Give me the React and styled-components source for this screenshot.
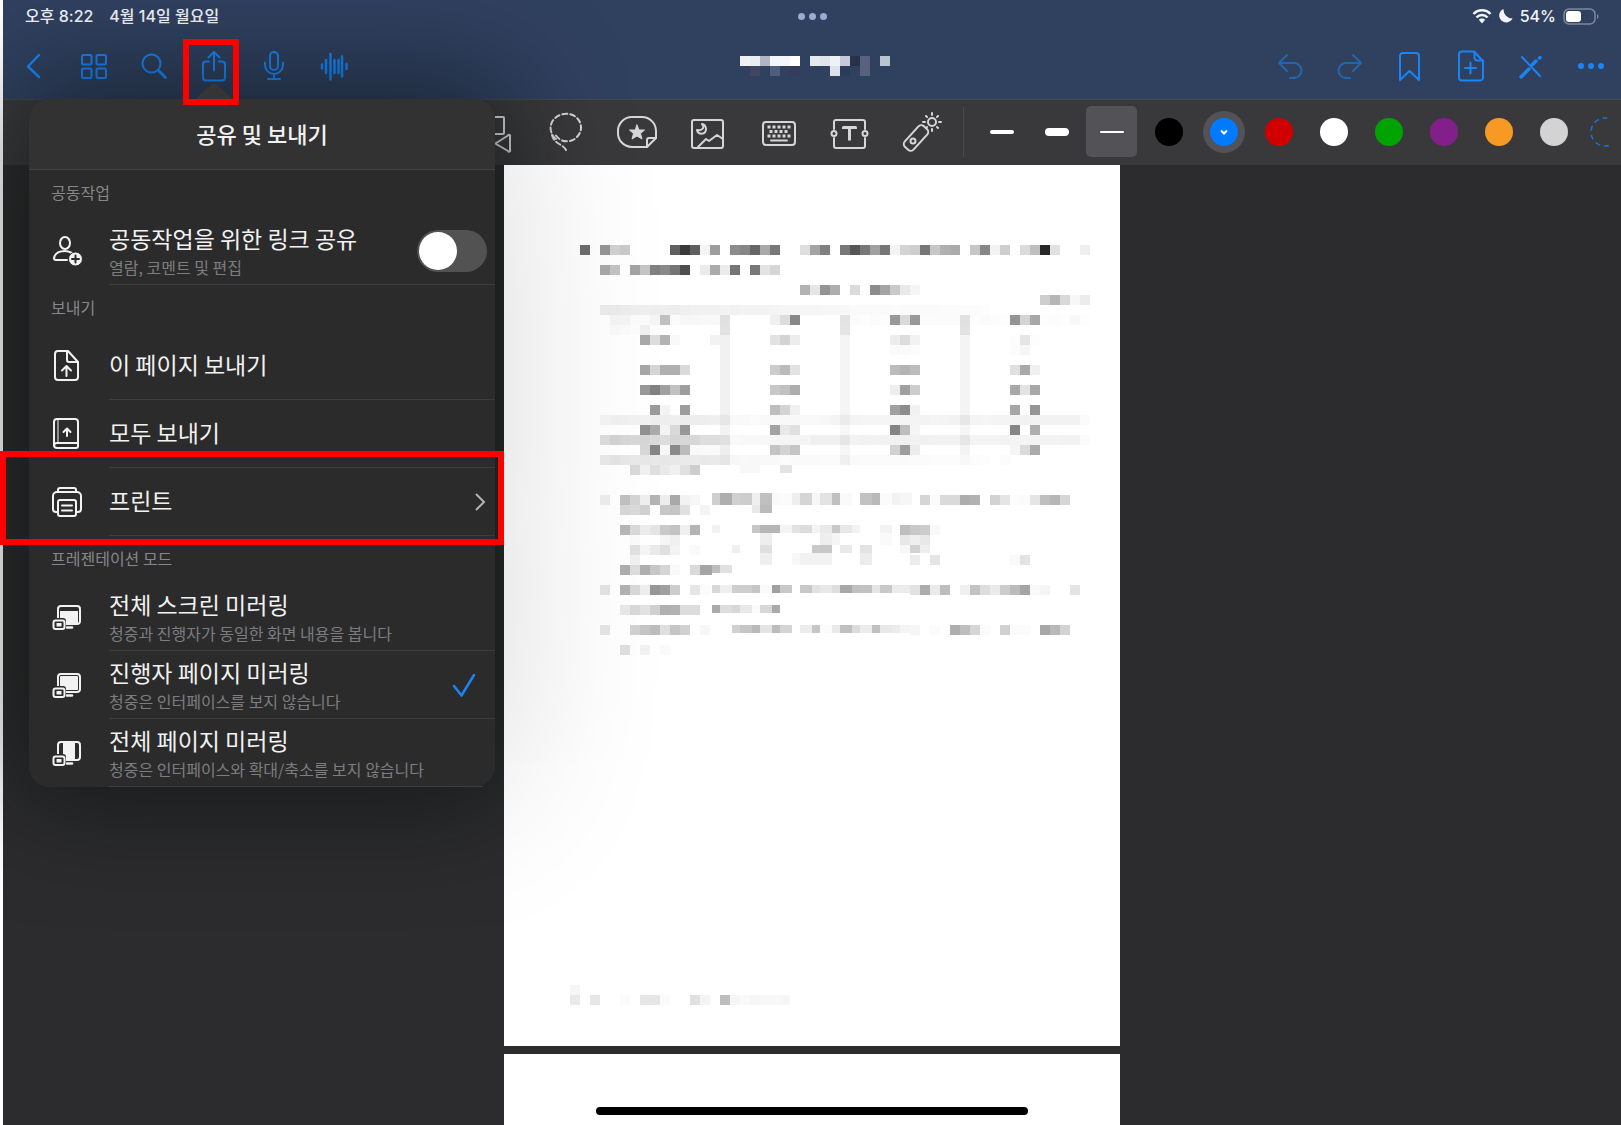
import { useState } from "react";
import styled, { createGlobalStyle } from "styled-components";

// cells that alternate between 8 and 12 wide
const MIXED = 0;

// [x, y, cell width, cell height, shades], ".." leaves a cell empty
const NOTE = [
    [76, 80, 10, 10, "6b"],
    [96, 80, 10, 10, "93cfc9........603a60f49d..8c8666a978....dfa480..785678a077f3d4ce76c7b0ab..c686f3ce..dbbf28e1....ee"],
    [96, 100, 10, 10, "a6c1..a2c48089754e..ebabeb75..78e2d6"],
    [296, 120, 10, 10, "b2e694ae..db..8ca4c9e9f5"],
    [536, 130, 10, 10, "ceb6d9f7ec"],
    [96, 140, 10, 10, "e8e9ebedeeedeeedeff1f1f1f3f1f3f3f3f4f5f5f6f6f7f7f8fafafafafbfafafafafbfbfcfcfd"],
    [106, 150, 10, 10, "f2f3fafaf5c0fbf7f7f8f9e1........f0dd88........e3fbfdfbfd99da99fbfbfbfbe1fdfbfcfd94d4a7fdfcfdf8fd"],
    [106, 160, 10, 10, "f7f9fbeffcfd"],
    [136, 170, 10, 10, "a8ddb3f9......f2f1........e2d3ed..................eddcf2..................fde5fd"],
    [386, 180, 10, 10, "fafafc..................fcf6"],
    [136, 200, 10, 10, "a6d5b0b0da................ccbbe3..................bcb4bd..................e0a9f0"],
    [136, 220, 10, 10, "9880a0c29e................c8c1ad..................eea0cd..................a8e3a8"],
    [146, 240, 10, 10, "9af3ff9d................bed4f0..................a08cf2..................a6fc95"],
    [96, 250, 10, 10, "f1eeeff0f1eeeeefededeeefe7f9f9fbf9f9f8f8f9f9f7f4ebf4f5f5f5f5f4f4f3f5f4f2e7f4f5f4f4f3f2f3f2f2f2f2fb"],
    [136, 260, 10, 10, "90abf3d998................a2e8e0..................84bdf5..................86ffae"],
    [96, 270, 10, 10, "dad1d5d7d5dadcd5d7d7dddde1f9f8f8f7f5f5f5f4f0f0f0e6f2f1f2f1f1f0f2f0f1f1f1e6f4f4f4f3f4f4f4f3f3f2f2fb"],
    [136, 280, 10, 10, "d685f78abbf9fafaee........c4d3c5..................d29dec..................f5dbab"],
    [96, 290, 10, 10, "e6e2e6e8e7e8e7e8eaeae9eae6f7f9f8f9f9fbfafafafbfbf0fafbfbfbfbfafbfbfcfcfcf8fcfd..fc"],
    [126, 300, 10, 10, "d8f0dfe9f0e0cd"],
    [236, 300, 20, 8, "f8"],
    [276, 300, 12, 8, "e3"],
    [96, 330, 10, 10, "ea..bfd3eeb3eda9f2f6"],
    [208, 328, MIXED, 12, "cfaed0cdefc0f9fbeed5f7e3c0fa..c2b9fbf2f6"],
    [416, 330, 10, 10, "d5fbdadaadb2..d2e5fdfbe5bfb6d6"],
    [116, 340, 10, 10, "d5d9d0..c7c5e1..f4"],
    [248, 340, MIXED, 8, "e9bb"],
    [116, 360, 10, 10, "b5d8ece4c9c3f0b4"],
    [208, 360, MIXED, 8, "f2......c6b6b6f4e3dcf4e9c8e8f2....f3"],
    [396, 360, 10, 10, "bec8ccf9"],
    [126, 370, 10, 10, "f9....f5f0"],
    [208, 368, MIXED, 12, "..........ee..........eef5........fa"],
    [396, 370, 10, 10, "e8efe8"],
    [126, 380, 10, 10, "e0f4eae0f3..fa"],
    [208, 380, MIXED, 8, "....f0....e0........c9c7..e9..e2"],
    [396, 380, 10, 8, "f7d2ee"],
    [126, 390, 10, 10, "ef"],
    [208, 388, MIXED, 12, "..........ef....f8f2f2f2......ec"],
    [406, 390, 10, 10, "ec..e4"],
    [506, 390, 10, 10, "f9e3"],
    [116, 400, 10, 10, "acdcaec6d5f9..da"],
    [196, 400, 12, 10, "a5"],
    [208, 400, MIXED, 8, "bde0"],
    [96, 420, 10, 10, "e0..b0d6ed97a0cd..e6fb"],
    [208, 420, MIXED, 8, "d8eececec4faa0c9..c8e2e8dea8c0c2e5c8ebec"],
    [406, 420, 10, 10, "e3aceabd..f0c2ddeaccbba4f9f5....e4"],
    [116, 440, 10, 10, "e7d7e2d0b0b2dcdc"],
    [208, 440, MIXED, 8, "aaddd7e9fad7aa"],
    [96, 460, 10, 10, "e2....d0c4bcdfc5d1..f7"],
    [208, 460, MIXED, 8, "....d0c6bae4bcd4..ecc6fbeac0dcecc0e8ecf4"],
    [406, 460, 10, 10, "f6..fb..aebed6fb..d0fbfb..a7b8d3"],
    [116, 480, 10, 10, "dd..f1..fa"],
    [66, 820, 10, 10, "f6"],
    [66, 830, 10, 10, "e9..e6....fb..e7e6fb....e0f4..bef6faf6f7f8f6"],
];

const NOTE_BARS = [
    [216, 150, 20, "#e2e2e2"],
    [216, 170, 80, "#f1f1f1"],
    [336, 150, 20, "#e4e4e6"],
    [336, 170, 80, "#f5f5f5"],
    [456, 150, 20, "#e2e2e2"],
    [456, 170, 80, "#f4f4f4"],
    [216, 260, 10, "#f3f3f5"],
    [336, 260, 10, "#f7f7f7"],
    [456, 260, 10, "#f6f6f6"],
    [336, 280, 10, "#f6f6f6"],
    [456, 280, 10, "#f4f4f4"],
];

const TITLE_CELLS = [
    [0, 0, "#f0f1f4"], [10, 0, "#eaedf1"], [20, 0, "#b2b5c4"], [30, 0, "#f3f6fa"], [40, 0, "#f3f6fa"],
    [50, 0, "#ffffff"], [70, 0, "#e6ebf0"], [80, 0, "#dfe5ea"], [90, 0, "#edf2f7"], [100, 0, "#c7c8dc"],
    [110, 0, "#28324a"], [120, 0, "#58627c"], [140, 0, "#bac5d2"],
    [10, 10, "#404560"], [30, 10, "#505d7b"], [50, 10, "#343b5c"], [90, 10, "#dbe2ea"], [100, 10, "#2c3b57"],
    [120, 10, "#58627c"],
];

const PEN_COLORS = [
    { name: "검정", value: "#000000" },
    { name: "파랑", value: "#007aff", active: true },
    { name: "빨강", value: "#d00000" },
    { name: "하양", value: "#ffffff" },
    { name: "초록", value: "#00a300" },
    { name: "보라", value: "#821f8b" },
    { name: "주황", value: "#f79a23" },
    { name: "회색", value: "#d3d3d3" },
];

const Icon = ({ w = 32, h = 32, children }) => (
    <svg width={w} height={h} viewBox={`0 0 ${w} ${h}`} fill="none" stroke="currentColor"
        strokeWidth="2" strokeLinecap="round" strokeLinejoin="round" aria-hidden="true">
        {children}
    </svg>
);

const NoteMosaic = () => (
    <MosaicArt viewBox="0 0 616 881" shapeRendering="crispEdges" aria-hidden="true">
        {NOTE_BARS.map(([x, y, h, fill], i) => (
            <rect key={i} x={x} y={y} width="10" height={h} fill={fill} />
        ))}
        {NOTE.map(([x, y, w, h, shades], row) =>
            shades.match(/../g).map((s, i) => {
                if (s === "..") return null;
                const odd = i % 2;
                const left = w === MIXED ? x + (i - odd) * 10 + odd * 8 : x + i * w;
                const width = w === MIXED ? 8 + odd * 4 : w;
                return <rect key={`${row}-${i}`} x={left} y={y} width={width} height={h} fill={`#${s}${s}${s}`} />;
            })
        )}
    </MosaicArt>
);

const ScreenIcon = ({ children }) => (
    <Icon>
        <rect x="7" y="5" width="22" height="18" rx="3" />
        {children}
        <path d="M16 26.500H21" strokeWidth="2.500" />
        <rect x="1" y="17" width="14" height="12" rx="3" fill="#2b2b2b" stroke="none" />
        <rect x="2.500" y="19.500" width="11" height="8.500" rx="2" />
        <rect x="5.500" y="22" width="5" height="3.500" fill="currentColor" stroke="none" />
    </Icon>
);

const NavIcons = {
    back: <Icon><path d="M21 5L10 16.500L21 27" strokeWidth="2.500" /></Icon>,
    grid: (
        <Icon>
            <rect x="4" y="5" width="9.500" height="9.500" rx="1.500" />
            <rect x="18.500" y="5" width="9.500" height="9.500" rx="1.500" />
            <rect x="4" y="18.500" width="9.500" height="9.500" rx="1.500" />
            <rect x="18.500" y="18.500" width="9.500" height="9.500" rx="1.500" />
        </Icon>
    ),
    search: <Icon><circle cx="13.500" cy="13.500" r="9" /><path d="M20.500 20.500L27.500 27.500" strokeWidth="3" /></Icon>,
    share: (
        <Icon>
            <path d="M11 11.500H8a3 3 0 0 0-3 3V27.500a3 3 0 0 0 3 3H24a3 3 0 0 0 3-3V14.500a3 3 0 0 0-3-3H21" />
            <path d="M16 20.500V2.500M10.500 7.500L16 2L21.500 7.500" />
        </Icon>
    ),
    mic: (
        <Icon>
            <rect x="12" y="2" width="8" height="18" rx="4" />
            <path d="M7 12.500V15a9 9 0 0 0 18 0V12.500M16 24V29M10 29H22" />
        </Icon>
    ),
    wave: <Icon><path d="M4 14.500V18.500M8 10V23M12.500 4V29.500M16.500 10V23M20.500 10V23M24 6.500V26.500M28.500 14V19" strokeWidth="2.500" /></Icon>,
    undo: <Icon><path d="M12 5L4 13L12 21M4 13H19a7.500 7.500 0 0 1 0 15H15" /></Icon>,
    redo: <Icon><path d="M18 5L26 13L18 21M26 13H11a7.500 7.500 0 0 0 0 15H15" /></Icon>,
    bookmark: <Icon><path d="M5 30V6a3 3 0 0 1 3-3H21a3 3 0 0 1 3 3V30L14.500 21Z" /></Icon>,
    addPage: (
        <Icon>
            <path d="M19 1.500H7a3 3 0 0 0-3 3V27.500a3 3 0 0 0 3 3H25a3 3 0 0 0 3-3V11Z" />
            <path d="M19.500 2V7.500a3 3 0 0 0 3 3H28M15.500 12.500V23.500M10 18H21" />
        </Icon>
    ),
    penOff: (
        <Icon>
            <path d="M7 7L25 26" />
            <path d="M6 27L7.500 25.500L14 19M17.500 14.500L21 11" strokeWidth="3.500" />
            <path d="M24.500 8L25 7.500" strokeWidth="3.500" />
        </Icon>
    ),
    more: (
        <Icon>
            <g fill="currentColor" stroke="none">
                <circle cx="6" cy="16" r="3" /><circle cx="16" cy="16" r="3" /><circle cx="26" cy="16" r="3" />
            </g>
        </Icon>
    ),
};

const NAV_LEFT = [
    ["back", "뒤로"], ["grid", "페이지 목록"], ["search", "검색"], ["share", "공유"], ["mic", "녹음"], ["wave", "오디오"],
];
const NAV_RIGHT = [
    ["undo", "실행 취소"], ["redo", "다시 실행"], ["bookmark", "책갈피"], ["addPage", "페이지 추가"],
    ["penOff", "읽기 전용"], ["more", "더 보기"],
];

const TOOLS = [
    ["도형", (
        <Icon w={40} h={44}>
            <rect x="12" y="7" width="17" height="17" rx="1" />
            <path d="M35 26.500V40a1 1 0 0 1-2 1L22 34.500a1 1 0 0 1 0-2L33 25.500a1 1 0 0 1 2 1Z" />
        </Icon>
    )],
    ["올가미", (
        <Icon w={40} h={44}>
            <path d="M10 29C5 25 3 18 6 12C10 4 22 1 30 7C38 14 36 25 27 30C20 33 13 31 9 24" strokeDasharray="5 3" />
            <path d="M6 25C8 34 17 34 20 40" strokeDasharray="5 3" />
        </Icon>
    )],
    ["스티커", (
        <Icon w={44} h={44}>
            <path d="M32 37H17a14 14 0 0 1-14-15a14 14 0 0 1 14-15H27a14 14 0 0 1 14 14V28Z" />
            <path d="M32 37V30a2 2 0 0 1 2-2H41" />
            <path d="M22 15L24 20H29.500L25.500 23.500L27 29L22 26L17 29L18.500 23.500L14.500 20H20Z" fill="currentColor" strokeWidth="1" />
        </Icon>
    )],
    ["이미지", (
        <Icon w={40} h={44}>
            <rect x="4" y="10" width="31" height="28" rx="2" />
            <path d="M10 37L18 29L21 31L29 25L35 29M14 14C17 17 15 21 9 20C10 25 18 25 18 19C18 16 16 14 14 14Z" />
        </Icon>
    )],
    ["키보드", (
        <Icon w={40} h={44}>
            <rect x="4" y="12" width="32" height="23" rx="3" />
            <path d="M8.500 17H32M10.500 21.500H30M8.500 26H32" strokeLinecap="butt" strokeWidth="3" strokeDasharray="3 2" />
            <path d="M12 30.500H28" />
        </Icon>
    )],
    ["텍스트", (
        <Icon w={40} h={44}>
            <path d="M4 19V12a2 2 0 0 1 2-2H33a2 2 0 0 1 2 2V19M4 28V36a2 2 0 0 0 2 2H33a2 2 0 0 0 2-2V28" />
            <circle cx="4" cy="23.500" r="2.500" /><circle cx="35" cy="23.500" r="2.500" />
            <path d="M13.500 19V17.500H25.500V19M19.500 17.500V30.500" strokeWidth="3" strokeLinecap="butt" />
        </Icon>
    )],
    ["레이저 포인터", (
        <Icon w={44} h={44}>
            <rect x="-6" y="-14" width="12" height="28" rx="4" transform="translate(17 28) rotate(42)" />
            <circle cx="14" cy="31" r="2.500" />
            <circle cx="33" cy="12" r="4" />
            <path d="M33 3V5M33 19V21M24 12H26M40 12H42M27 6L28 7M38 17L39 18M39 6L38 7M27 18L28 17" />
        </Icon>
    )],
];

const App = () => {
    const [shared, setShared] = useState(false);

    return (
        <Screen>
            <GlobalStyle />
            <Header>
                <StatusBar>
                    <StatusSide>
                        <span>오후 8:22</span>
                        <span>4월 14일 월요일</span>
                    </StatusSide>
                    <Dots><i /><i /><i /></Dots>
                    <StatusInfo>
                        <svg width="20" height="16" viewBox="0 0 20 16" fill="none" stroke="currentColor" strokeWidth="2.500" aria-hidden="true">
                            <path d="M1.500 6C6 1 14 1 18.500 6M4.500 9.500C7.500 6 12.500 6 15.500 9.500" />
                            <path d="M10 15.500L6.800 11.800C8.500 10 11.500 10 13.200 11.800Z" fill="currentColor" stroke="none" />
                        </svg>
                        <svg width="14" height="14" viewBox="0 0 14 14" fill="currentColor" aria-hidden="true">
                            <path d="M4.500 0A7 7 0 1 0 13.500 9.500A9 9 0 0 1 4.500 0Z" />
                        </svg>
                        <span>54%</span>
                        <svg width="36" height="17" viewBox="0 0 36 17" aria-hidden="true">
                            <rect x="1" y="1" width="31" height="15" rx="5" fill="none" stroke="#7d889f" strokeWidth="1.500" />
                            <rect x="3" y="3" width="15" height="11" rx="3" fill="#fff" />
                            <path d="M34 6C36 7 36 10 34 11Z" fill="#7d889f" />
                        </svg>
                    </StatusInfo>
                </StatusBar>
                <NavBar>
                    <NavGroup>
                        {NAV_LEFT.map(([id, label]) => (
                            <NavButton key={id} aria-label={label} $marked={id === "share"}>{NavIcons[id]}</NavButton>
                        ))}
                    </NavGroup>
                    <TitleArt width="150" height="20" viewBox="0 0 150 20" shapeRendering="crispEdges" aria-hidden="true">
                        {TITLE_CELLS.map(([x, y, fill]) => (
                            <rect key={`${x}-${y}`} x={x} y={y} width="10" height="10" fill={fill} />
                        ))}
                    </TitleArt>
                    <NavGroup>
                        {NAV_RIGHT.map(([id, label]) => (
                            <NavButton key={id} aria-label={label} disabled={id === "undo" || id === "redo"}>{NavIcons[id]}</NavButton>
                        ))}
                    </NavGroup>
                </NavBar>
            </Header>

            <ToolBar>
                {TOOLS.map(([label, icon]) => (
                    <ToolButton key={label} aria-label={label}>{icon}</ToolButton>
                ))}
                <Divider />
                <PenButton aria-label="중간 선"><Stroke $size={4} /></PenButton>
                <PenButton aria-label="굵은 선"><Stroke $size={8} /></PenButton>
                <PenButton aria-label="가는 선" $active><Stroke $size={2} /></PenButton>
                <Swatches>
                    {PEN_COLORS.map(({ name, value, active }) => (
                        <SwatchButton key={name} aria-label={name}>
                            <Swatch $color={value} $active={active}>
                                {active && (
                                    <svg width="8" height="6" viewBox="0 0 8 6" fill="none" stroke="#fff" strokeWidth="2" aria-hidden="true">
                                        <path d="M1 1.500L4 4.500L7 1.500" />
                                    </svg>
                                )}
                            </Swatch>
                        </SwatchButton>
                    ))}
                    <MoreColors aria-label="색상 추가">
                        <svg width="30" height="32" viewBox="0 0 30 32" fill="none" stroke="#1a72d0" strokeWidth="1.500" aria-hidden="true">
                            <circle cx="24" cy="16" r="14" strokeDasharray="5 4" />
                        </svg>
                    </MoreColors>
                </Swatches>
            </ToolBar>

            <Canvas>
                <Page><NoteMosaic /></Page>
                <Page $next />
            </Canvas>

            <Popover>
                <PopoverTitle>공유 및 보내기</PopoverTitle>

                <SectionLabel>공동작업</SectionLabel>
                <Row as="label">
                    <Icon>
                        <ellipse cx="14" cy="8" rx="5" ry="6" />
                        <path d="M16 25H5a2 2 0 0 1-2-2C4 18 9 16 14 16C17 16 19 17 21 18" />
                        <circle cx="24.500" cy="24" r="7" fill="currentColor" stroke="#2b2b2b" strokeWidth="1" />
                        <path d="M24.500 20.500V27.500M21 24H28" stroke="#2b2b2b" />
                    </Icon>
                    <RowBody>
                        <RowText>
                            <RowTitle>공동작업을 위한 링크 공유</RowTitle>
                            <RowNote>열람, 코멘트 및 편집</RowNote>
                        </RowText>
                        <Toggle checked={shared} onChange={(e) => setShared(e.target.checked)} />
                    </RowBody>
                </Row>

                <SectionLabel>보내기</SectionLabel>
                <Row>
                    <Icon>
                        <path d="M17 1H7a3 3 0 0 0-3 3V27a3 3 0 0 0 3 3H24a3 3 0 0 0 3-3V12Z" />
                        <path d="M16 1V10a2 2 0 0 0 2 2H27M15.500 26V17M11 20.500L15.500 16L20 20.500" />
                    </Icon>
                    <RowBody><RowTitle $single>이 페이지 보내기</RowTitle></RowBody>
                </Row>
                <Row>
                    <Icon>
                        <path d="M27 25V4a3 3 0 0 0-3-3H6a3 3 0 0 0-3 3V27a3 3 0 0 0 3 3H25a2 2 0 0 0 2-2M27 25H6a3 3 0 0 0-3 3M27 25V28" />
                        <path d="M7 2V25" strokeWidth="1" />
                        <path d="M16 18V11M12.500 14L16 10.500L19.500 14" />
                    </Icon>
                    <RowBody><RowTitle $single>모두 보내기</RowTitle></RowBody>
                </Row>
                <Row $marked>
                    <Icon>
                        <path d="M7 26H5a3 3 0 0 1-3-3V10a4 4 0 0 1 4-4H26a4 4 0 0 1 4 4V23a3 3 0 0 1-3 3H25" />
                        <path d="M7 6V4a2 2 0 0 1 2-2H23a2 2 0 0 1 2 2V6" />
                        <rect x="7" y="14" width="18" height="16" rx="2" />
                        <path d="M11 19.500H21M11 24.500H21" />
                    </Icon>
                    <RowBody>
                        <RowTitle $single>프린트</RowTitle>
                        <Chevron width="12" height="20" viewBox="0 0 12 20" fill="none" stroke="currentColor" strokeWidth="2" aria-hidden="true">
                            <path d="M2 2L10 10L2 18" />
                        </Chevron>
                    </RowBody>
                </Row>

                <SectionLabel>프레젠테이션 모드</SectionLabel>
                <Row>
                    <ScreenIcon><rect x="9" y="10" width="18" height="12" fill="currentColor" stroke="none" /></ScreenIcon>
                    <RowBody>
                        <RowText>
                            <RowTitle>전체 스크린 미러링</RowTitle>
                            <RowNote>청중과 진행자가 동일한 화면 내용을 봅니다</RowNote>
                        </RowText>
                    </RowBody>
                </Row>
                <Row>
                    <ScreenIcon><rect x="9" y="7" width="18" height="14" rx="1" fill="currentColor" stroke="none" /></ScreenIcon>
                    <RowBody>
                        <RowText>
                            <RowTitle>진행자 페이지 미러링</RowTitle>
                            <RowNote>청중은 인터페이스를 보지 않습니다</RowNote>
                        </RowText>
                        <Check width="24" height="26" viewBox="0 0 24 26" fill="none" stroke="currentColor" strokeWidth="2.500" strokeLinecap="round" strokeLinejoin="round" aria-hidden="true">
                            <path d="M2 14L9.500 23.500L22 3" />
                        </Check>
                    </RowBody>
                </Row>
                <Row $last>
                    <ScreenIcon><rect x="12" y="6" width="12" height="16" fill="currentColor" stroke="none" /></ScreenIcon>
                    <RowBody>
                        <RowText>
                            <RowTitle>전체 페이지 미러링</RowTitle>
                            <RowNote>청중은 인터페이스와 확대/축소를 보지 않습니다</RowNote>
                        </RowText>
                    </RowBody>
                </Row>
            </Popover>

            <HomeIndicator />
        </Screen>
    );
};

const GlobalStyle = createGlobalStyle`
    * {
        box-sizing: border-box;
    }
    body {
        margin: 0;
        background: #fff;
        font-family: "Noto Sans CJK KR", sans-serif;
    }
    button, input {
        margin: 0;
        padding: 0;
        border: 0;
        background: none;
        font: inherit;
        color: inherit;
        text-align: left;
    }
    svg {
        flex: none;
        display: block;
    }
`;

const Screen = styled.div`
    position: relative;
    display: flex;
    flex-direction: column;
    height: 100vh;
    margin-left: 3px;
    overflow: clip;
    overflow-clip-margin: 3px;
    background: #2c2c2e;
`;

const Header = styled.header`
    flex: none;
    background: #30405f;
    border-bottom: 1px solid #46464d;
`;

const StatusBar = styled.div`
    display: grid;
    grid-template-columns: 1fr auto 1fr;
    align-items: center;
    height: 32px;
    padding: 0 22px;
    color: #f2f4f8;
    font-family: Inter, "Noto Sans CJK KR", sans-serif;
    font-size: 16px;
    font-weight: 500;
    line-height: 20px;
`;

const StatusSide = styled.div`
    display: flex;
    gap: 16px;
`;

const StatusInfo = styled.div`
    display: flex;
    align-items: center;
    justify-content: flex-end;
    gap: 7px;
`;

const Dots = styled.div`
    display: flex;
    gap: 4px;
    i {
        width: 7px;
        height: 7px;
        border-radius: 50%;
        background: #9aaad0;
    }
`;

const NavBar = styled.nav`
    display: grid;
    grid-template-columns: 1fr auto 1fr;
    align-items: center;
    height: 67px;
`;

const NavGroup = styled.div`
    display: flex;
    &:first-child {
        padding-left: 1px;
    }
    &:last-child {
        justify-content: flex-end;
    }
`;

const NavButton = styled.button`
    position: relative;
    display: flex;
    align-items: center;
    justify-content: center;
    width: 60px;
    height: 66px;
    color: #1a84f5;
    &:disabled {
        color: #2466ac;
    }
    ${({ $marked }) => $marked && `
        &::after {
            content: "";
            position: absolute;
            z-index: 5;
            inset: 6px 5px -6px -1px;
            border: 6px solid #ff0000;
        }
    `}
`;

const TitleArt = styled.svg`
    margin-left: 6px;
`;

const ToolBar = styled.div`
    flex: none;
    display: flex;
    align-items: center;
    justify-content: flex-end;
    height: 65px;
    padding: 0 10px 2px 0;
    background: #39393b;
    color: #d6d6d6;
`;

const ToolButton = styled.button`
    flex: none;
    display: flex;
    align-items: center;
    justify-content: center;
    width: 71px;
    height: 50px;
`;

const Divider = styled.div`
    width: 1px;
    height: 50px;
    margin: 0 10px 0 7px;
    background: #4b4b4d;
`;

const PenButton = styled.button`
    display: flex;
    align-items: center;
    justify-content: center;
    width: 51px;
    height: 51px;
    margin: 0 2px;
    border-radius: 5px;
    background: ${({ $active }) => ($active ? "#525257" : "transparent")};
`;

const Stroke = styled.span`
    width: 24px;
    height: ${({ $size }) => $size}px;
    border-radius: 4px;
    background: #fff;
`;

const Swatches = styled.div`
    display: flex;
    align-items: center;
    margin-left: 2px;
`;

const SwatchButton = styled.button`
    display: flex;
    align-items: center;
    justify-content: center;
    width: 55px;
    height: 50px;
`;

const Swatch = styled.span`
    display: flex;
    align-items: center;
    justify-content: center;
    width: 28px;
    height: 28px;
    border-radius: 50%;
    background: ${({ $color }) => $color};
    box-shadow: ${({ $active }) => ($active ? "0 0 0 7px #525257" : "none")};
`;

const MoreColors = styled.button`
    width: 30px;
    overflow: hidden;
`;

const Canvas = styled.main`
    flex: 1;
    display: flex;
    flex-direction: column;
    align-items: center;
    gap: 8px;
    min-height: 0;
`;

const Page = styled.section`
    position: relative;
    z-index: 3;
    flex: ${({ $next }) => ($next ? "1" : "none")};
    width: 100%;
    max-width: 616px;
    overflow: hidden;
    background: #fff;
    ${({ $next }) => !$next && `
        &::before {
            content: "";
            position: absolute;
            top: -66px;
            left: -475px;
            width: 466px;
            height: 689px;
            box-shadow: 0 0 170px rgba(0, 0, 0, 0.19);
        }
    `}
`;

const MosaicArt = styled.svg`
    position: relative;
    width: 100%;
`;

const Popover = styled.aside`
    position: absolute;
    z-index: 2;
    top: 99px;
    left: 26px;
    width: 466px;
    border-radius: 20px;
    background: #2b2b2b;
    color: #f2f2f2;
    box-shadow: 0 0 110px 12px rgba(4, 10, 6, 0.55);
    &::before {
        content: "";
        position: absolute;
        top: -16px;
        left: 166px;
        width: 38px;
        height: 16px;
        background: #353535;
        clip-path: polygon(0 100%, 42% 10%, 50% 0, 58% 10%, 100% 100%);
    }
`;

const PopoverTitle = styled.h1`
    margin: 0;
    height: 71px;
    border-bottom: 1px solid #434345;
    border-radius: 20px 20px 0 0;
    background: #323233;
    font-size: 22px;
    font-weight: 500;
    line-height: 68px;
    text-align: center;
`;

const SectionLabel = styled.h2`
    margin: 0;
    padding: 11px 22px 0;
    height: 47px;
    color: #87878b;
    font-size: 16px;
    font-weight: 400;
    line-height: 22px;
`;

const Row = styled.button`
    position: relative;
    display: flex;
    align-items: center;
    gap: 26px;
    width: 100%;
    height: 68px;
    padding-left: 22px;
    ${({ $last }) => $last && "padding-right: 12px;"}
    ${({ $marked }) => $marked && `
        &::after {
            content: "";
            position: absolute;
            inset: -17px -9px -9px -29px;
            border: 6px solid #ff0000;
        }
    `}
`;

const RowBody = styled.span`
    flex: 1;
    display: flex;
    align-items: center;
    justify-content: space-between;
    height: 100%;
    border-bottom: 1px solid #3d3d3f;
`;

const RowText = styled.span`
    display: flex;
    flex-direction: column;
    gap: 2px;
`;

const RowTitle = styled.span`
    padding-bottom: ${({ $single }) => ($single ? 4 : 0)}px;
    font-size: 23px;
    line-height: 30px;
    white-space: nowrap;
`;

const RowNote = styled.span`
    color: #7d7d81;
    font-size: 16px;
    line-height: 24px;
    white-space: nowrap;
`;

const Toggle = styled.input.attrs({ type: "checkbox" })`
    appearance: none;
    flex: none;
    width: 70px;
    height: 42px;
    margin-right: 8px;
    padding: 2px;
    border-radius: 21px;
    background: #525252;
    &::before {
        content: "";
        display: block;
        width: 38px;
        height: 38px;
        border-radius: 50%;
        background: #fff;
    }
    &:checked {
        background: #007aff;
    }
    &:checked::before {
        margin-left: auto;
    }
`;

const Chevron = styled.svg`
    margin-right: 9px;
    color: #b4b4b6;
`;

const Check = styled.svg`
    margin-right: 19px;
    color: #1a84f5;
`;

const HomeIndicator = styled.div`
    position: absolute;
    z-index: 4;
    bottom: 10px;
    left: calc(50% - 216px);
    width: 432px;
    height: 8px;
    border-radius: 4px;
    background: #000;
`;

export default App;
